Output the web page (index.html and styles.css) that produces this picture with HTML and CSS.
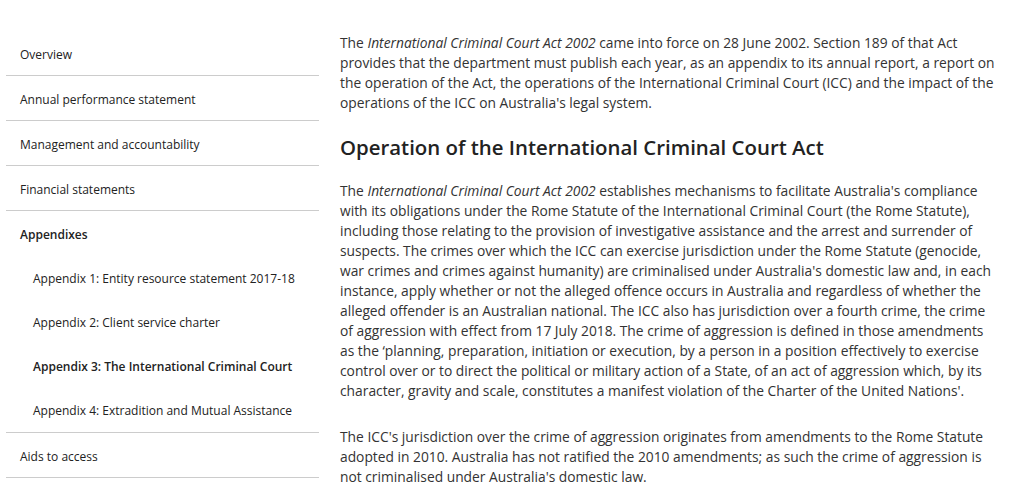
FILE: index.html
```html
<!DOCTYPE html>
<html lang="en">
<head>
<meta charset="utf-8">
<title>Appendix 3: The International Criminal Court</title>
<link rel="stylesheet" href="styles.css">
</head>
<body>
<div class="page">
  <nav class="sidenav">
    <ul class="nav-list">
      <li class="nav-item"><a href="#">Overview</a></li>
      <li class="nav-item"><a href="#">Annual performance statement</a></li>
      <li class="nav-item"><a href="#">Management and accountability</a></li>
      <li class="nav-item"><a href="#">Financial statements</a></li>
      <li class="nav-item nav-group">
        <a href="#" class="strong">Appendixes</a>
        <ul class="sub-list">
          <li class="sub-item"><a href="#">Appendix 1: Entity resource statement 2017-18</a></li>
          <li class="sub-item"><a href="#">Appendix 2: Client service charter</a></li>
          <li class="sub-item"><a href="#" class="strong">Appendix 3: The International Criminal Court</a></li>
          <li class="sub-item"><a href="#">Appendix 4: Extradition and Mutual Assistance</a></li>
        </ul>
      </li>
      <li class="nav-item"><a href="#">Aids to access</a></li>
    </ul>
  </nav>
  <main class="content">
    <p>The <em>International Criminal Court Act 2002</em> came into force on 28 June 2002. Section 189 of that Act provides that the department must publish each year, as an appendix to its annual report, a report on the operation of the Act, the operations of the International Criminal Court (ICC) and the impact of the operations of the ICC on Australia's legal system.</p>
    <h2>Operation of the International Criminal Court Act</h2>
    <p>The <em>International Criminal Court Act 2002</em> establishes mechanisms to facilitate Australia's compliance with its obligations under the Rome Statute of the International Criminal Court (the Rome Statute), including those relating to the provision of investigative assistance and the arrest and surrender of suspects. The crimes over which the ICC can exercise jurisdiction under the Rome Statute (genocide, war crimes and crimes against humanity) are criminalised under Australia's domestic law and, in each instance, apply whether or not the alleged offence occurs in Australia and regardless of whether the alleged offender is an Australian national. The ICC also has jurisdiction over a fourth crime, the crime of aggression with effect from 17 July 2018. The crime of aggression is defined in those amendments as the ‘planning, preparation, initiation or execution, by a person in a position effectively to exercise control over or to direct the political or military action of a State, of an act of aggression which, by its character, gravity and scale, constitutes a manifest violation of the Charter of the United Nations'.</p>
    <p>The ICC's jurisdiction over the crime of aggression originates from amendments to the Rome Statute adopted in 2010. Australia has not ratified the 2010 amendments; as such the crime of aggression is not criminalised under Australia's domestic law.</p>
  </main>
</div>
</body>
</html>
```

FILE: styles.css
```css
html, body {
  margin: 0;
  padding: 0;
  background: #ffffff;
}

body {
  font-family: "Open Sans", "Liberation Sans", sans-serif;
  color: #333333;
}

.page {
  display: flex;
  align-items: flex-start;
  padding-top: 31px;
}

.sidenav {
  width: 313px;
  margin-left: 6px;
  flex: none;
}

.nav-list,
.sub-list {
  list-style: none;
  margin: 0;
  padding: 0;
}

.nav-item {
  border-bottom: 1px solid #cccccc;
}

.nav-item a {
  display: block;
  padding: 15px 0 11px 14px;
  font-size: 12px;
  line-height: 18px;
  color: #222222;
  text-decoration: none;
}

.nav-item a.strong {
  font-weight: 600;
}

.nav-group {
  padding-bottom: 1px;
}

.sub-item a {
  padding-left: 27px;
}

.content {
  margin-left: 21px;
  width: 656px;
  padding-top: 2px;
}

.content p {
  margin: 0;
  font-size: 13.8px;
  line-height: 20px;
  color: #333333;
}

.content p + p {
  margin-top: 26px;
}

.content h2 {
  margin: 20px 0 20px 0;
  font-size: 20.4px;
  line-height: 28px;
  font-weight: 600;
  color: #222222;
}
```
